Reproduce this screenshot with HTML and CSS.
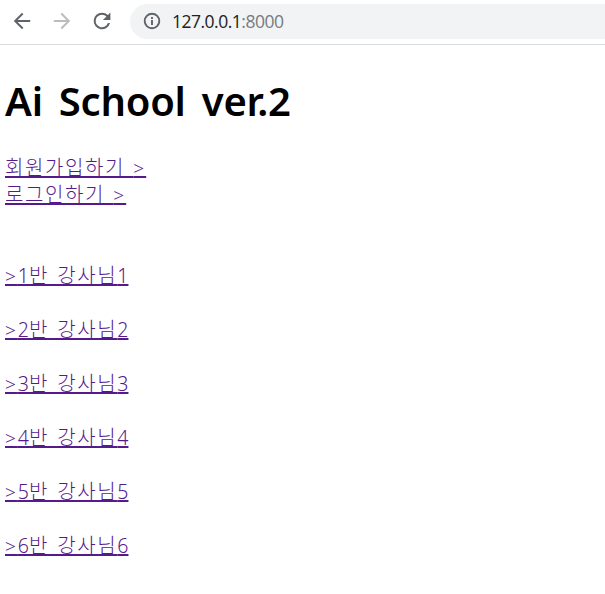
FILE: index.html
```html
<!DOCTYPE html>
<html lang="ko">
<head>
<meta charset="utf-8">
<title>Ai School</title>
<link rel="stylesheet" href="styles.css">
</head>
<body>
<header class="toolbar">
  <svg class="nav" viewBox="0 0 24 24"><path d="M20.2 11H7.6l5.8-5.8L12 3.8 3.8 12l8.2 8.2 1.4-1.4L7.6 13h12.6z"/></svg>
  <svg class="nav nav-off" viewBox="0 0 24 24"><path d="M3.8 11h12.6l-5.8-5.8L12 3.8l8.2 8.2-8.2 8.2-1.4-1.4 5.8-5.8H3.8z"/></svg>
  <svg class="nav" viewBox="0 0 24 24"><path d="M17.9 6.1A8.35 8.35 0 0 0 12 3.7a8.3 8.3 0 1 0 8 10.4h-2.1A6.3 6.3 0 1 1 12 5.7c1.75 0 3.3.72 4.4 1.85L13 11h7.4V3.6z"/></svg>
  <div class="address">
    <svg class="info" viewBox="0 0 18 18"><circle cx="9" cy="9" r="7.3"/><path d="M9 8v5M9 5v2"/></svg>
    <span class="url">127.0.0.1<span class="port">:8000</span></span>
  </div>
</header>
<main class="page">
  <h1 class="title">Ai School ver.2</h1>
  <nav class="account">
    <a href="#">회원가입하기 <span class="gt">&gt;</span></a>
    <a href="#">로그인하기 <span class="gt">&gt;</span></a>
  </nav>
  <nav class="classes">
    <a href="#"><span class="gt">&gt;</span><span class="num">1</span>반 강사님<span class="num">1</span></a>
    <a href="#"><span class="gt">&gt;</span><span class="num">2</span>반 강사님<span class="num">2</span></a>
    <a href="#"><span class="gt">&gt;</span><span class="num">3</span>반 강사님<span class="num">3</span></a>
    <a href="#"><span class="gt">&gt;</span><span class="num">4</span>반 강사님<span class="num">4</span></a>
    <a href="#"><span class="gt">&gt;</span><span class="num">5</span>반 강사님<span class="num">5</span></a>
    <a href="#"><span class="gt">&gt;</span><span class="num">6</span>반 강사님<span class="num">6</span></a>
  </nav>
</main>
</body>
</html>
```
FILE: styles.css
```css
* { box-sizing: border-box; }
body { margin: 0; background: #fff; overflow: hidden; font-family: "Noto Sans", "Noto Sans CJK KR", sans-serif; }
.toolbar { display: flex; align-items: center; height: 45px; padding-left: 10px; border-bottom: 1px solid #dadce0; }
.nav { width: 24px; height: 24px; margin: 0 16px 2px 0; flex: none; fill: #5f6368; }
.nav-off { fill: #babcbe; }
.address { display: flex; align-items: center; flex: 1; height: 35px; margin: 0 -30px 2px 0; padding-left: 13px; border-radius: 18px; background: #f1f3f4; }
.info { width: 18px; height: 18px; fill: none; stroke: #5f6368; stroke-width: 1.9; }
.url { margin-left: 11px; font: 17.5px/24px "Open Sans", sans-serif; letter-spacing: -.5px; color: #202124; }
.port { color: #777b80; }
.page { padding: 29px 5px 0; }
.title { margin: 0; height: 54px; font-size: 40px; line-height: 54px; font-weight: 600; letter-spacing: -.25px; word-spacing: 6px; color: #000; white-space: nowrap; }
.account, .classes { display: flex; flex-direction: column; align-items: flex-start; }
.account { margin-top: 26px; }
.classes { margin-top: 54px; gap: 27px; }
a { height: 27px; font-size: 20px; line-height: 27px; font-weight: 300; letter-spacing: 1.6px; word-spacing: 1.5px; color: #551a8b; text-decoration: underline; text-decoration-thickness: 2px; text-underline-offset: 1px; text-decoration-skip-ink: none; white-space: nowrap; }
.gt { font-size: 19px; letter-spacing: 2px; }
.num { font-size: 19.5px; letter-spacing: 0; }
```
